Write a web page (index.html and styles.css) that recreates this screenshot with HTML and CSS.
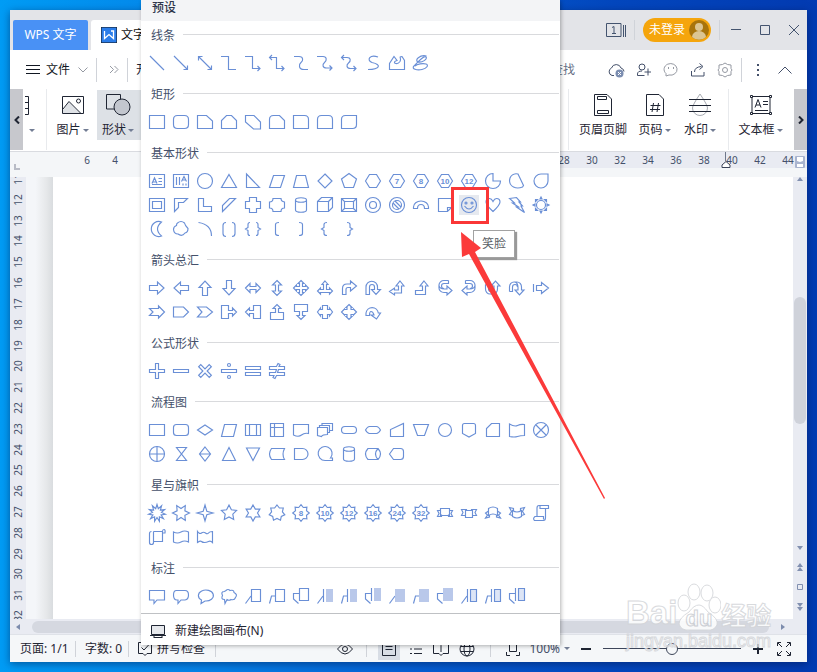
FILE: index.html
```html
<!DOCTYPE html>
<html lang="zh-CN">
<head>
<meta charset="utf-8">
<title>WPS 文字</title>
<link rel="stylesheet" href="styles.css">
</head>
<body>
<main class="window">
  <header class="titlebar">
    <button class="home-tab">WPS 文字</button>
    <button class="doc-tab"><svg width="16" height="16" viewBox="0 0 16 16"><rect width="16" height="16" rx="1" fill="#2b7de9"/><path d="M3.500 4v7.500l4.500-4 4.500 4V4h-2.500" fill="none" stroke="#fff" stroke-width="1.300"/></svg>文字</button>
    <span class="spacer"></span>
    <button class="icon-btn count" aria-label="窗口"><svg width="20" height="14" viewBox="0 0 20 14"><path d="M.5.500h14.500v13H.5zM17.500 2v12M19.500 2v12" /><path d="M6 4.500l2-1v7M6 10.500h4"/></svg></button>
    <span class="rule"></span>
    <button class="login">未登录<svg width="20" height="20" viewBox="0 0 20 20"><circle cx="10" cy="10" r="10" fill="#a8740c" stroke="none"/><circle cx="10" cy="7" r="4" fill="#dcc592" stroke="none"/><path d="M3 17a7 6 0 0 1 14 0 10 10 0 0 1-14 0z" fill="#dcc592" stroke="none"/></svg></button>
    <span class="rule"></span>
    <div class="win-controls">
      <button class="icon-btn" aria-label="最小化"><svg width="12" height="12" viewBox="0 0 12 12"><path d="M1 5.500h10"/></svg></button>
      <button class="icon-btn" aria-label="最大化"><svg width="12" height="12" viewBox="0 0 12 12"><path d="M1.500 1.500h9v9h-9z"/></svg></button>
      <button class="icon-btn" aria-label="关闭"><svg width="12" height="12" viewBox="0 0 12 12"><path d="M1 1l10 10M11 1L1 11"/></svg></button>
    </div>
  </header>

  <nav class="menubar">
    <button class="file"><svg width="14" height="12" viewBox="0 0 14 12"><path d="M0 1.500h14M0 5.500h14M0 9.500h14"/></svg>文件<svg class="faint" width="10" height="6" viewBox="0 0 10 6"><path d="M.5.500l4.500 4.500L9.500.500"/></svg></button>
    <span class="rule"></span>
    <button class="icon-btn faint more" aria-label="更多"><svg width="10" height="9" viewBox="0 0 10 9"><path d="M1 1l3.500 3.500L1 8M5.500 1L9 4.500 5.500 8"/></svg></button>
    <span class="rule"></span>
    <button class="start">开始</button>
    <span class="spacer"></span>
    <button class="find">查找</button>
    <div class="menu-icons">
      <button class="icon-btn" aria-label="云同步"><svg width="18" height="16" viewBox="0 0 18 16"><path d="M7 13.500H5a4 4 0 0 1-.5-7.500 5 5 0 0 1 9.500 0q3 1 3 3.500"/><circle cx="12.500" cy="11.500" r="4" fill="#7b8db0" stroke="none"/><path d="M11 10l3 3M14 10l-3 3" stroke="#fff"/></svg></button>
      <button class="icon-btn" aria-label="共享用户"><svg width="16" height="16" viewBox="0 0 16 16"><circle cx="6" cy="5" r="3"/><path d="M8.500 13.500H1.500V12q0-3 4.500-3M12 6.500v7M8.500 10h6.500"/></svg></button>
      <button class="icon-btn faint" aria-label="消息"><svg width="16" height="16" viewBox="0 0 16 16"><path d="M3 11.500A6.500 5.800 0 1 1 6 13l-3 1zM5.500 5v2M10.500 5v2"/></svg></button>
      <button class="icon-btn" aria-label="分享"><svg width="16" height="16" viewBox="0 0 16 16"><path d="M1.500 9v5h12.500v-4M4.500 10q0-5 7-5.500M9.500 1.500l3.500 3-3.500 3"/></svg></button>
      <button class="icon-btn faint" aria-label="设置"><svg width="16" height="16" viewBox="0 0 16 16"><path d="M5.500 2.500L8 1l2.500 1.500 3.500.5v3.500L15 8l-1 1.500V13l-3.500.5L8 15l-2.500-1.500L2 13V9.500L1 8l1-1.500V3z"/><circle cx="8" cy="8" r="2.500"/></svg></button>
    </div>
    <span class="rule"></span>
    <button class="icon-btn dots" aria-label="选项"><svg width="4" height="14" viewBox="0 0 4 14"><path d="M2 1v2M2 6v2M2 11v2" stroke-width="2"/></svg></button>
    <button class="icon-btn fold" aria-label="收起"><svg width="14" height="8" viewBox="0 0 14 8"><path d="M.5 7.500L7 1l6.500 6.500"/></svg></button>
  </nav>

  <section class="ribbon">
    <button class="scroll-btn" aria-label="向左"><svg width="6" height="8" viewBox="0 0 6 8"><path d="M5 .5L1.500 4 5 7.500"/></svg></button>
    <button class="tool cut" aria-label="表格"><svg width="5" height="22" viewBox="0 0 5 22"><path d="M0 2.500h3.500v18H0M0 8.500h3.500M0 14.500h3.500"/></svg><span class="caption"><i class="caret"></i></span></button>
    <span class="rule"></span>
    <button class="tool picture"><svg width="24" height="24" viewBox="0 0 24 24"><path d="M1.500 3.500h21v17h-21z" fill="#fff"/><path d="M2 17l6-8 11 11H2z" fill="#dfe2e6" stroke="none"/><path d="M2 16l6-7.500L19.500 20"/><circle cx="17.500" cy="8" r="2"/></svg><span class="caption">图片<i class="caret"></i></span></button>
    <button class="tool active"><svg width="26" height="24" viewBox="0 0 26 24"><path d="M1.500 1.500h14v14.500h-14z"/><circle cx="17" cy="14" r="8" fill="#c2c6ce"/></svg><span class="caption">形状<i class="caret"></i></span></button>
    <span class="spacer"></span>
    <span class="rule"></span>
    <button class="tool header-tool"><svg width="24" height="24" viewBox="0 0 24 24"><path d="M3.500 1.500H16l4.500 4.500v16.500h-17zM6.500 3.500h9v3h-9zM6.500 17.500h11v3h-11z"/></svg><span class="caption">页眉页脚</span></button>
    <button class="tool number-tool"><svg width="24" height="24" viewBox="0 0 24 24"><path d="M3.500 1.500H16l4.500 4.500v16.500h-17zM10.500 10l-1.500 9M15.500 10L14 19M7.500 12.500h10M7 16.500h10"/></svg><span class="caption">页码<i class="caret"></i></span></button>
    <button class="tool mark-tool"><svg width="24" height="24" viewBox="0 0 24 24"><path d="M12 1Q4.500 12 4.500 15a7.500 7.500 0 0 0 15 0Q19.500 12 12 1z" stroke="#a9acb3"/><path d="M1 6.500h22M1 12.500h22M1 18.500h22"/></svg><span class="caption">水印<i class="caret"></i></span></button>
    <span class="rule"></span>
    <button class="tool textbox"><svg width="24" height="24" viewBox="0 0 24 24"><path d="M3 3.500h18v17H3zM6 14.500L9 6.500l3 8M7 12h4M14 8.500h5M14 11.500h5M6 17.500h13"/><path d="M1.500 2.500h2v2h-2zM20.500 2.500h2v2h-2zM1.500 19.500h2v2h-2zM20.500 19.500h2v2h-2z" fill="#fff"/></svg><span class="caption">文本框<i class="caret"></i></span></button>
    <button class="scroll-btn right" aria-label="向右"><svg width="6" height="8" viewBox="0 0 6 8"><path d="M1 .5L4.500 4 1 7.500"/></svg></button>
  </section>

  <div class="ruler">
    <svg class="tabstop" width="6" height="6" viewBox="0 0 6 6"><path d="M1 0v5h5" fill="none" stroke="#b9bcc6" stroke-width="2"/></svg>
    <div class="ticks"><span>6</span><span>4</span></div>
    <span class="spacer"></span>
    <div class="ticks"><span>28</span><span>30</span><span>32</span><span>34</span><span>36</span><span>38</span><span>40</span><span>42</span><span>44</span></div>
    <svg class="indent" width="10" height="16" viewBox="0 0 10 16"><path d="M4.500 0v9" stroke="#70788a"/><path d="M5 9.500l4 3.500v2.500H1V13z" fill="#fff" stroke="#3a4358"/></svg>
    <svg class="save" width="10" height="12" viewBox="0 0 10 12"><rect width="10" height="12" rx="1" fill="#a9b4cf"/><path d="M2 1h6v4L5 6 2 5zM2 8h6v3H2z" fill="#fff"/></svg>
  </div>

  <section class="workspace">
    <div class="vruler"><div class="vticks" id="vticks"></div></div>
    <div class="gutter"></div>
    <div class="page"></div>
    <div class="vscroll">
      <svg class="up" width="6" height="4" viewBox="0 0 6 4"><path d="M0 4l3-4 3 4z"/></svg>
      <div class="vtrack"><div class="vthumb"></div></div>
      <svg width="6" height="4" viewBox="0 0 6 4"><path d="M0 0l3 4 3-4z"/></svg>
      <svg width="6" height="8" viewBox="0 0 6 8"><path d="M0 4l3-4 3 4zM0 8l3-4 3 4z"/></svg>
      <svg width="6" height="6" viewBox="0 0 6 6"><path d="M.5.500h5v5h-5z" fill="none" stroke="#8290b0"/></svg>
      <svg width="6" height="8" viewBox="0 0 6 8"><path d="M0 0l3 4 3-4zM0 4l3 4 3-4z"/></svg>
    </div>
  </section>

  <div class="hscroll">
    <svg width="4" height="6" viewBox="0 0 4 6"><path d="M4 0L0 3l4 3z"/></svg>
    <div class="hthumb"></div>
    <svg width="4" height="6" viewBox="0 0 4 6"><path d="M0 0l4 3-4 3z"/></svg>
  </div>

  <footer class="status">
    <span class="cell pages">页面: 1/1</span><span class="rule"></span>
    <span class="cell words">字数: 0</span><span class="rule"></span>
    <button class="spell"><svg width="16" height="16" viewBox="0 0 16 16"><path d="M13 1.500h1.500v11H10l-2 2-2-2H1.500v-11H10M4.500 6.500L7 9l5.500-6"/></svg>拼写检查</button><span class="rule"></span>
    <span class="spacer"></span>
    <button class="icon-btn eye" aria-label="护眼模式"><svg width="16" height="12" viewBox="0 0 16 12"><path d="M.5 6Q8-4 15.500 6 8 16 .5 6z"/><circle cx="8" cy="6" r="2.500"/></svg></button>
    <span class="rule"></span>
    <div class="views">
      <button class="icon-btn on" aria-label="页面视图"><svg width="14" height="14" viewBox="0 0 14 14"><path d="M.5.500h13v13H.5zM3.500 4.500h7M3.500 7.500h7"/></svg></button>
      <button class="icon-btn" aria-label="大纲"><svg width="14" height="12" viewBox="0 0 14 12"><path d="M0 1.500h2M4 1.500h10M2 6h2M6 6h8M2 10.500h2M6 10.500h8"/></svg></button>
      <button class="icon-btn" aria-label="阅读"><svg width="16" height="14" viewBox="0 0 16 14"><path d="M.5 1.500H6l2 2 2-2h5.500v10H10l-2 2-2-2H.5zM8 4v6"/></svg></button>
      <button class="icon-btn" aria-label="网页"><svg width="16" height="16" viewBox="0 0 16 16"><circle cx="8" cy="8" r="7"/><ellipse cx="8" cy="8" rx="3" ry="7"/><path d="M1.500 5.500h13M1.500 10.500h13"/></svg></button>
    </div>
    <span class="rule"></span>
    <button class="icon-btn fit" aria-label="适合页面"><svg width="14" height="14" viewBox="0 0 14 14"><path d="M3.500 1h7v8.500h-7zM.5 10v3.500H4M10 13.500h3.500V10"/></svg></button>
    <button class="zoom">100%<i class="caret"></i></button>
    <button class="icon-btn" aria-label="缩小"><svg width="10" height="10" viewBox="0 0 10 10"><path d="M0 5h10" stroke-width="2"/></svg></button>
    <input class="slider" type="range" aria-label="缩放" min="0" max="100" value="50">
    <button class="icon-btn" aria-label="放大"><svg width="10" height="10" viewBox="0 0 10 10"><path d="M0 5h10M5 0v10" stroke-width="2"/></svg></button>
    <button class="icon-btn full" aria-label="全屏"><svg width="14" height="14" viewBox="0 0 14 14"><path d="M.5 4V.5H4M10 .5h3.500V4M13.500 10v3.500H10M4 13.500H.5V10M1 1l4 4M13 1L9 5M13 13L9 9M1 13l4-4"/></svg></button>
  </footer>
</main>

<aside class="popup">
  <h2>预设</h2>
  <div id="gallery"></div>
  <button class="canvas"><svg width="16" height="14" viewBox="0 0 16 14"><path d="M1.500 1.500h13v9h-13z" fill="#e6e8ec"/><path d="M0 11.500h16M4 12v2M12 12v2M4 13.500h8"/></svg>新建绘图画布(N)</button>
</aside>

<div class="tooltip">笑脸</div>
<div class="marker"></div>
<svg class="pointer" width="146" height="268" viewBox="0 0 146 268"><path d="M0 0l20 16-6 4 130 246-1 1L8 22l-7 3z" fill="#fb3a3a"/></svg>

<div class="watermark">
  <div class="brand"><span>Bai</span><svg width="44" height="48" viewBox="2 3 44 48"><g fill="#fff" stroke="#d4d6da" stroke-width="1"><ellipse cx="9" cy="23" rx="6" ry="8"/><ellipse cx="19" cy="12" rx="6" ry="8"/><ellipse cx="32" cy="13" rx="6" ry="8"/><ellipse cx="40" cy="25" rx="6" ry="8"/><path d="M24 25q4 0 9 7 11 7 9 13-3 6-10 5H15q-9 1-11-6 0-6 10-12 5-7 10-7z"/></g><text x="24" y="46" text-anchor="middle">du</text></svg><span class="cn">经验</span></div>
  <div class="site">jingyan.baidu.com</div>
</div>
<script src="shapes.js"></script>
</body>
</html>
```
FILE: styles.css
```css
* { box-sizing: border-box; }
body {
  margin: 0;
  height: 100vh;
  padding: 10px;
  position: relative;
  overflow: hidden;
  display: flex;
  font: 12px/16px "Noto Sans", "Noto Sans CJK SC", sans-serif;
  color: #1f2533;
  background: linear-gradient(90deg, #009cf5 0%, #0583e8 25%, #0560d4 50%, #0347be 75%, #033bb2 100%);
}
button { font: inherit; color: inherit; background: none; border: 0; padding: 0; margin: 0; display: flex; align-items: center; white-space: nowrap; flex: none; }
button svg { fill: none; stroke: currentColor; }
svg { display: block; flex: none; }
h2, h3 { margin: 0; font-size: 12px; }
.icon-btn { justify-content: center; }
.spacer { flex: 1; }
.rule { flex: none; width: 1px; height: 20px; background: #d0d3d9; }
.caret { border: 3px solid transparent; border-top: 3px solid #727d94; border-bottom: 0; }
.faint { color: #9599a2; }

.window { flex: 1; min-width: 0; display: flex; flex-direction: column; background: #fff; box-shadow: 0 2px 8px rgba(0, 20, 70, .5); overflow: hidden; }

.titlebar { flex: none; height: 40px; padding: 0 7px 0 3px; display: flex; align-items: center; background: #e3e4e8; color: #44546f; }
.home-tab { align-self: flex-end; height: 30px; width: 75px; justify-content: center; background: #4991f5; color: #fff; border-radius: 2px 2px 0 0; }
.doc-tab { align-self: flex-end; height: 30px; width: 120px; margin-left: 3px; padding-left: 10px; gap: 4px; background: #fff; color: #111; border-radius: 3px 3px 0 0; }
.count { margin-right: 8px; }
.login { height: 24px; margin: 0 8px; padding: 0 2px 0 6px; gap: 4px; border-radius: 12px; background: #f5a50c; color: #fff; }
.win-controls { display: flex; gap: 17px; margin-left: 10px; }

.menubar { flex: none; height: 39px; padding: 0 15px 0 16px; display: flex; align-items: center; color: #44506a; }
.menubar .rule { height: 24px; }
.file { color: #111722; gap: 6px; margin-right: 8px; }
.file .faint { margin-left: 2px; }
.more { margin: 0 8px 0 12px; }
.start { margin-left: 8px; color: #1f2533; }
.find { margin-right: 32px; color: #667085; }
.menu-icons { display: flex; gap: 11px; margin-right: 8px; }
.dots { margin: 0 18px 0 14px; }

.ribbon { flex: none; height: 63px; display: flex; align-items: flex-start; border-bottom: 1px solid #d9dbe0; }
.ribbon > .rule { height: 61px; background: #e8eaed; }
.scroll-btn { width: 13px; height: 61px; justify-content: center; background: #c7c8cd; }
.scroll-btn svg { stroke-width: 2; }
.tool { flex-direction: column; height: 50px; width: 45px; margin-top: 1px; padding-top: 3px; gap: 5px; }
.caption { display: flex; align-items: center; gap: 2px; height: 16px; }
.tool svg { height: 24px; }
.cut { width: 23px; align-items: flex-start; padding-left: 2px; }
.cut .caption { padding-left: 4px; }
.picture { margin-left: 3px; }
.active { background: #dde1e6; width: 44px; margin-left: 2px; padding-right: 2px; }
.header-tool { width: 68px; }
.number-tool { width: 35px; }
.mark-tool { width: 56px; }
.textbox { width: 65px; padding-right: 2px; }

.ruler { flex: none; position: relative; height: 25px; display: flex; align-items: flex-start; padding-right: 5px; color: #44506a; font-size: 10px; background: linear-gradient(#e9ebf2, #e9ebf2) 100% 0 / 660px 16px no-repeat #f4f6f8; }
.tabstop { margin: 12px 0 0 4px; }
.ticks { display: flex; }
.ticks span { width: 28px; text-align: center; }
.tabstop + .ticks { margin-left: 53px; }
.indent { position: absolute; right: 76px; top: 0; }
.save { position: absolute; right: 2px; top: 4px; }

.workspace { flex: 1; min-height: 0; display: flex; }
.vruler { width: 16px; background: #e9ebf2; overflow: hidden; display: flex; }
.vticks { flex: 1; margin: -8px 0; display: flex; flex-direction: column; font-size: 10px; color: #44506a; }
.vticks span { flex: 1; min-height: 0; writing-mode: vertical-rl; transform: rotate(180deg); text-align: center; }
.gutter { width: 27px; background: linear-gradient(90deg, #f4f6f9 35%, #e6e8ea 75%, #d9dcdf); }
.page { flex: 1; background: #fff; }
.vscroll { width: 14px; background: #e9ebf2; display: flex; flex-direction: column; align-items: center; gap: 13px; padding-bottom: 8px; fill: #8290b0; }
.vtrack { flex: 1; align-self: stretch; padding: 0 1px; margin-top: -13px; }
.vthumb { height: 36%; margin-top: 116px; border-radius: 6px; background: #cfd2da; }

.hscroll { flex: none; height: 15px; display: flex; align-items: center; justify-content: space-between; gap: 12px; padding: 0 22px 0 6px; background: #e9ebf2; fill: #7d8cad; }
.hthumb { flex: 1; height: 12px; border-radius: 6px; background: #d5d8e0; }

.status { flex: none; height: 28px; display: flex; align-items: center; padding-right: 16px; background: #f5f7f9; border-top: 1px solid #dfe2e8; color: #1f2533; }
.status .rule { height: 16px; }
.cell { flex: none; }
.pages { width: 65px; padding-left: 10px; }
.words { width: 52px; padding-left: 9px; }
.spell { gap: 4px; margin: 0 10px 0 8px; }
.eye { margin-right: 13px; }
.views { display: flex; gap: 4px; margin: 0 12px 0 11px; }
.views button { width: 22px; height: 22px; }
.views .on { background: #d8dde5; }
.fit { margin: 0 9px 0 15px; }
.zoom { gap: 4px; margin-right: 11px; color: #44506a; }
.slider { appearance: none; width: 138px; height: 12px; margin: 0 12px; background: linear-gradient(#3d465a, #3d465a) 0 50% / 100% 1px no-repeat; }
.slider::-webkit-slider-thumb { appearance: none; width: 12px; height: 12px; border: 1px solid #3d465a; border-radius: 50%; background: #f5f7f9; }
.full { margin-left: 14px; }

.popup { position: absolute; left: 141px; top: 0; width: 419px; background: #fff; box-shadow: 1px 1px 4px rgba(0, 0, 0, .3); }
.popup h2 { height: 21px; padding-left: 11px; line-height: 15px; font-weight: 500; background: #f3f4f6; color: #2f374b; }
.group { padding-bottom: 5px; }
.group h3 { display: flex; align-items: center; gap: 8px; height: 27px; margin-bottom: 3px; padding: 0 1px 0 10px; line-height: 18px; font-weight: 400; color: #44506a; }
.group h3 span { padding-top: 2px; }
.group h3::after { content: ""; flex: 1; height: 1px; background: #d9dadd; }
.shapes { display: grid; grid-template-columns: repeat(17, 24px); grid-auto-rows: 24px; padding-left: 4px; color: #6a8fd6; }
.shapes svg { stroke-width: 1.15px; }
.shapes text { font: 700 8px/8px "Liberation Sans", sans-serif; fill: currentColor; stroke: none; text-anchor: middle; }
.shapes .solid { fill: #b9c8ea; stroke: none; }
.shapes .tint { fill: #dde5f6; }
.shapes .picked { background: linear-gradient(#e6e9ef, #e6e9ef) 50% / 20px 20px no-repeat; }
.canvas { width: 100%; height: 32px; padding: 2px 0 0 9px; gap: 9px; border-top: 1px solid #bfc1c4; }

.tooltip { position: absolute; left: 473px; top: 230px; padding: 5px 8px; color: #5b5f66; background: #fff; border: 1px solid #a2a2a2; box-shadow: 2px 2px 1px #999; }
.marker { position: absolute; left: 451px; top: 187px; width: 38px; height: 37px; border: 3px solid #fa3636; }
.pointer { position: absolute; left: 461px; top: 232px; }

.watermark { position: absolute; left: 626px; top: 583px; opacity: .85; color: #fff; -webkit-text-stroke: 1px #d2d4d8; }
.brand { display: flex; align-items: flex-end; font: 700 33px/36px "Liberation Sans", sans-serif; }
.brand text { font-size: 22px; fill: #fff; stroke: #c9ccd1; }
.brand .cn { font: 700 25px/34px "Noto Sans CJK SC", sans-serif; }
.site { font: 18px/20px "Liberation Sans", sans-serif; }
```
FILE: shapes.js
```js
// Each shape is drawn in a 24 x 24 cell centred on (12, 12).
const p = (d, cls) => `<path d="${d}"${cls ? ` class="${cls}"` : ''}/>`;
const turn = (a, s) => `<g transform="rotate(${a} 12 12)">${s}</g>`;
const flip = s => `<g transform="matrix(-1 0 0 1 24 0)">${s}</g>`;
const circle = (r, x = 12, y = 12) => `<circle cx="${x}" cy="${y}" r="${r}"/>`;
const num = t => `<text x="12" y="15">${t}</text>`;
function star(n, outer, inner, start = -90) {
  let d = '';
  for (let i = 0; i < n * 2; i++) {
    const r = i % 2 ? inner : outer;
    const a = (start + i * 180 / n) * Math.PI / 180;
    d += (i ? 'L' : 'M') + (12 + r * Math.cos(a)).toFixed(1) + ' ' + (12 + r * Math.sin(a)).toFixed(1);
  }
  return p(d + 'z');
}
const hex = 'M4.500 12l4-6.500h7l4 6.500-4 6.500h-7z';
const right = p('M4.500 9.500h8v-3.500l6.500 6-6.500 6v-3.500h-8z');
const curved = p('M15.500 4.500h-4.500a5 4.500 0 0 0-5 4.500v3a5 4.500 0 0 0 5 4.500h3V19l5-4.500-5-4.500v3h-2.500q-5 0-5.500-3.500M15.500 4.500v3H11q-2.500 0-2.500 2.500t2.500 2.500');
const boxArrow = p('M4.500 5.500h7v5h4V8l4 4-4 4v-2.500h-4v5h-7z');
const lead = ['M4.500 19.500L10 12', 'M4.500 19.500l2-7.500H10', 'M9.500 19.500L4.500 15V9.500H10'];

const groups = [
  ['线条', [
    p('M5 5l14 14'), p('M5 5l13.500 13.500M18.500 14.500v4h-4'), p('M5.500 5.500l13 13M18.500 14.500v4h-4M5.500 9.500v-4h4'),
    p('M4 5.500h7.500v13H19'), p('M4 5.500h7.500v12H19M16.500 15l2.500 2.500-2.500 2.500'), p('M4.500 6.500h7v11H19M16.500 15l2.500 2.500-2.500 2.500M7 4L4.500 6.500 7 9'),
    p('M5 5.500h5c5 0 4 4.500 2 6s-3 7 3 7h4'), p('M4 5.500h6c4 0 4 4 1.500 6s-2 5.500 2 5.500H19M16.500 14.500L19 17l-2.500 2.500'), p('M5 6.500h5c4 0 4 3.500 1.500 5.500s-2 5.500 2 5.500H19M16.500 15l2.500 2.500-2.500 2.500M7 4L4.500 6.500 7 9'),
    p('M17 6C9 3 5 9 11 11.500c10 2 8 7-4 7'), p('M4.500 18.500v-6L9 5.500l3 4c-6 2 0 5 3 1 2-3-2-5 2-5l2.500 4v9z'), p('M17.500 5C11 3.500 5 9 9 11c4 1 10-3 8-5S8 12 5 15s3 4.500 8 3.500 7-4.500 4-5.500-9 0-11 2')
  ]],
  ['矩形', [
    p('M4.500 5.500h15v13h-15z'), p('M8.500 5.500h7q4 0 4 4v5q0 4-4 4h-7q-4 0-4-4v-5q0-4 4-4z'),
    p('M4.500 5.500h9l6 5.500v7.500h-15z'), p('M9.500 5.500h5l5 5v8h-15v-8z'), p('M4.500 5.500h8.500l6.500 6.500v7h-7L4.500 12z'),
    p('M4.500 18.500v-9q0-4 4-4h6l5 5v8z'), p('M4.500 5.500h11q4 0 4 4v9h-15z'), p('M4.500 18.500v-9q0-4 4-4h7q4 0 4 4v9z'), p('M8.500 5.500h11v9q0 4-4 4h-11v-9q0-4 4-4z')
  ]],
  ['基本形状', [
    p('M4.500 5.500h15v13h-15zM7 14.500L9.500 9l2.500 5.500M8 13h3M13.500 9.500H17M13.500 12.500H17M7 15.500h10'), p('M4.500 5.500h15v13h-15zM7.500 8v8M10.500 8v8M12.500 12.500L15 7.500l2.500 5M13.500 11h3M14 14.500v2M17 14.500v2'), circle(7.5),
    p('M12 5.500l7.500 13h-15z'), p('M5.500 5l13 13.500h-13z'), p('M8.500 6.500h11l-4 12h-11z'), p('M7.500 6.500h9l3 12h-15z'), p('M12 5l7 7-7 7-7-7z'), p('M12 4.500l7.500 5.500-3 8.500h-9L4.500 10z'), p(hex),
    p(hex) + num(7), p(hex) + num(8), p(hex) + num(10), p(hex) + num(12), p('M12 4.500a7.500 7.500 0 1 0 7.500 7.500H12z'), p('M9.500 5a7 7 0 0 0-1 13q4 2 9 0l1-1.500L13 5q-2-.5-3.500 0z'), p('M19 5v7a7 7 0 1 1-7-7z'),
    p('M4.500 5.500h15v13h-15zM7.500 8.500h9v7h-9z'), p('M5.500 5.500h13l-4 4h-5v5l-4 4z'), p('M5.500 5.500h5v8h8v5h-13z'), p('M5.500 18.500v-6l7-7h6z'), p('M8.500 4.500h7v4h4v7h-4v4h-7v-4h-4v-7h4z'), p('M8 5.500h8q0 3 3.500 3.500v6q-3.500 0-3.500 3.500H8q0-3.500-3.500-3.500V9Q8 9 8 5.500z'), p('M6.500 7v10c0 3 11 3 11 0V7c0-3-11-3-11 0s11 3 11 0'), p('M4.500 8.500l4-4h11v10l-4 4h-11zM4.500 8.500h11v10M15.500 8.500l4-4'), p('M4.500 5.500h15v13h-15zM7.500 8.500h9v7h-9zM4.500 5.500l3 3M19.500 5.500l-3 3M4.500 18.500l3-3M19.500 18.500l-3-3'), circle(7.5) + circle(3.5), circle(7.5) + circle(4.5) + p('M8 10l6 6M10 8l6 6'), p('M4.500 15.500V14a7.500 6 0 0 1 15 0v1.500h-4q0-4-3.500-4t-3.500 4z'), p('M5.500 5.500h13v9l-4 4h-9zM14.500 18.500v-4h4'),
    circle(7.5) + circle(1, 9, 10) + circle(1, 15, 10) + p('M7.500 13q4.500 6 9 0'), p('M12 18.500Q5 12 5 9q0-3.500 3.500-3.500 2 0 3.500 3 1.500-3 3.500-3Q19 5.500 19 9q0 3-7 9.500z'), p('M4.500 5.500l7-1 4 4.500h-1.500l3.500 4h-1.500l3.500 6.500-8-5.500h2l-6-4h2z'), circle(4.5) + p('M11 6l1-2 1 2zM11 18l1 2 1-2zM6 11l-2 1 2 1zM18 11l2 1-2 1zM6.500 8.500l0-2 2 0zM17.500 8.500l0-2-2 0zM6.500 15.500l0 2 2 0zM17.500 15.500l0 2-2 0z'),
    p('M16.500 5a7.500 7.500 0 1 0 0 14q-8-7 0-14z'), p('M8.500 6q3.500-3 7 0 .5 2.500 3.500 5.500 0 4-3 4.500-3 4-7 1-4 0-4.500-4.500 0-3 3-4 0-2 1-2.500z'), p('M5.500 5.500q13 2 13 13.500'), p('M9 5.500q-3 0-3 3v8q0 3 3 3M15 5.500q3 0 3 3v8q0 3-3 3'), p('M9 5.500q-2 0-2 2v3L4.500 12 7 13.500v3q0 2 2 2M15 5.500q2 0 2 2v3l2.500 1.500-2.500 1.500v3q0 2-2 2'), p('M14 5.500q-3.500 0-3.500 2v9q0 2 3.500 2'), p('M10 5.500q3.500 0 3.500 2v9q0 2-3.500 2'), p('M14 5.500q-3 0-3 2v3L8.500 12l2.500 1.500v3q0 2 3 2'), p('M10 5.500q3 0 3 2v3l2.500 1.500-2.500 1.500v3q0 2-3 2')
  ]],
  ['箭头总汇', [
    right, turn(180, right), turn(-90, right), turn(90, right),
    p('M4.500 12l4.500-4.500v3h6v-3l4.500 4.500-4.500 4.500v-3H9v3z'), turn(90, p('M4.500 12l4.500-4.500v3h6v-3l4.500 4.500-4.500 4.500v-3H9v3z')),
    p('M12 4.500l3 3h-1.500v3h3V9l3 3-3 3v-1.500h-3v3H15l-3 3-3-3h1.500v-3h-3V15l-3-3 3-3v1.500h3v-3H9z'), p('M12 5l3 3.500h-1.500v5h3V12l3 3-3 3v-1.500h-9V18l-3-3 3-3v1.500h3v-5H9z'),
    p('M5.500 18.500v-6q0-4.500 4.500-4.500h3.500V5l6 5-6 5v-3.500H11q-2 0-2 2v5z'), p('M5 18.500V11a5.500 5.500 0 0 1 11.500 0v2.500h3l-4.500 5-4.500-5h3V11a2.500 2.500 0 0 0-5 0v7.500z'),
    p('M15 5l4 5h-2.500v7h-7v2l-5-3.500 5-3.500v2h4V10H11z'), p('M15 5l4 5h-2.500v8.500h-10v-4h7V10H11z'), curved, flip(curved), turn(-90, curved), flip(turn(90, curved)), p('M4.500 8v8M7.500 9.500h5v-3l7 5.500-7 5.500v-3h-5z'),
    p('M4.500 8.500h9V6l6 6-6 6v-2.500h-9L8 12z'), p('M4.500 7h10l5 5-5 5h-10z'), p('M4.500 7h9l6 5-6 5h-9L9 12z'), boxArrow, turn(180, boxArrow), turn(-90, boxArrow), turn(90, boxArrow),
    p('M9.500 5.500h5v4h2V8l3 4-3 4v-1.500h-2v4h-5v-4h-2V16l-3-4 3-4v1.500h2z'), p('M12 4.500l3 3h-1v2h2.500V9l3 3-3 3v-.500H14v2h1l-3 3-3-3h1v-2H7.500v.500l-3-3 3-3v.500H10v-2H9z'), p('M5 15.500V13a6.200 6.200 0 0 1 12.300 0h2.200L15.500 19 10 15h3q-1-3.500-3-3.500-1.500 0-1.500 4z')
  ]],
  ['公式形状', [
    p('M10.500 4.500h3v6h6v3h-6v6h-3v-6h-6v-3h6z'), p('M4.500 10.500h15v3h-15z'), turn(45, p('M10.500 4.500h3v6h6v3h-6v6h-3v-6h-6v-3h6z')), p('M4.500 10.500h15v3h-15z') + circle(1.5, 12, 6) + circle(1.5, 12, 18), p('M4.500 7.500h15v3h-15zM4.500 13.500h15v3h-15z'), p('M4.500 7.500h7l1.500-3 2 1-1 2h5.500v3h-6l-1 3h7v3h-8l-1.500 3-2-1 1-2h-4.500v-3h6l1-3h-7z')
  ]],
  ['流程图', [
    p('M4.500 6.500h15v11h-15z'), '<rect x="4.500" y="6.500" width="15" height="11" rx="3"/>', p('M12 7l7.500 5-7.500 5-7.500-5z'), p('M7.500 6.500h12l-3 12h-12z'), p('M4.500 6.500h15v11h-15zM8.500 6.500v11M15.500 6.500v11'), p('M5.500 5.500h13v13h-13zM9.500 5.500v13M5.500 9.500h13'), p('M4.500 6.500h15v9q-4-1-7 1.500t-8 0z'), p('M4.500 9.500h10v7q-5 0-6 2l-4-1zM6.500 9.500v-2h10v7h-2M9 7.500v-2h10.500v7h-3'), '<rect x="4.500" y="8.500" width="15" height="7" rx="3.500"/>', p('M4.500 12q2-3.500 4-3.500h7q2 0 4 3.500-2 3.500-4 3.500h-7q-2 0-4-3.500z'), p('M5.500 18.500v-7l13-6v13z'), p('M4.500 6.500h15l-4 11h-7z'), circle(6.5), p('M7.500 5.500h9q2 0 2 2v8L12 19l-6.500-3.500v-8q0-2 2-2z'), p('M10.500 5.500h8v13h-13v-8z'), p('M4.500 6q5 3 8 1.500t7-1v11q-4 0-7 1t-8 0z'), circle(7.5) + p('M7 7l10 10M17 7L7 17'),
    circle(7.5) + p('M12 4.500v15M4.500 12h15'), p('M7.500 5.500h10l-10 13h10z'), p('M12 5l5.500 7-5.500 7-5.500-7zM6.500 12h11'), p('M12 5.500l6.500 13h-13z'), p('M5.500 6h13L12 18.500z'), p('M6.500 6.500h13q-3 6 0 11h-13q-4-5.500 0-11z'), p('M5.500 6.500h8a5.500 5.500 0 0 1 0 11h-8z'), p('M17.500 16a7 7 0 1 0-5 2.500h7V16z'), p('M6.500 7v10c0 3 11 3 11 0V7c0-3-11-3-11 0s11 3 11 0'), p('M7 6.500h10q5 5.500 0 11H7q-5-5.500 0-11zM17 6.500q-5 5.500 0 11'), p('M4.500 12l4-5.500h7q3 0 3 3v5q0 3-3 3h-7z')
  ]],
  ['星与旗帜', [
    star(11, 8.5, 4.5), star(6, 8.5, 4.5, -60), star(4, 8, 2.5), star(5, 8, 4), star(6, 8, 4.5), star(7, 8, 5.5),
    ...[8, 10, 12, 16, 24, 32].map(n => star(8, 8.3, 6) + num(n)),
    p('M7.500 7.500h9v7h-9zM7.500 9.500h-3l1.500 3-1.500 3h4v-2M16.500 9.500h3l-1.500 3 1.500 3h-4v-2'), p('M8.500 9.500h7v7h-7zM8.500 14.500h-4l1.500-3-1.500-3h5v1M15.500 14.500h4l-1.500-3 1.500-3h-5v1'), p('M7.500 7.500q4.500-3 9 0v7q-4.500-3-9 0zM7.500 10l-3 2 2 2-2 3 4-1v-2M16.500 10l3 2-2 2 2 3-4-1v-2'), p('M7.500 9.500q4.500 3 9 0v6q-4.500 3-9 0zM7.500 14.500l-3-1 2-3-2-4 4 1v2M16.500 14.500l3-1-2-3 2-4-4 1v2'), p('M8 15.500V7q0-2.500 2-2.500h9.500v3h-3v9q0 3-2 3H5.500q-2-2 .5-4h8.500v3M11 4.500v3h5'),
    p('M8.500 6.500h9v10h-9M6.500 6.500q-2 0-2 2v9q0 2 2 2t2-2v-11M17.500 6.500q0-2 1.500-2t1 3.500h-3'), p('M4.500 7q4 2 7.500 0t7.500 0v10q-4-2-7.500 0t-7.500 0z'), p('M4.500 6.500q2 3 4 1.500t4 0 3 0 4-1.500v11q-2-2-4-1t-4 1-3-1-4 1z')
  ]],
  ['标注', [
    p('M4.500 6.500h15V16H12l-3 3.500V16H4.500z'), p('M8 6.500h8q3.500 0 3.500 4.500T16 16h-4l-3 3.500V16H8q-3.500 0-3.500-5T8 6.500z'), p('M8 19.500l.5-3.500A7.500 5.500 0 1 1 12 17z'), p('M9 6.500q2-2 4 0 4-1 4 2 4 2 1.500 5-1 3-4.500 2-2 1.500-4 0L8 19.500l-.5-4q-4 0-2-4-2-4 2-4z'),
    p('M10.500 5.500h9v12h-9z' + lead[0]), p('M10.500 5.500h9v12h-9z' + lead[1]), p('M10.500 4.500h9v12h-9z' + lead[2]),
    ...lead.map((l, i) => p(`M10.500 ${i === 2 ? 4 : 5}v13${l}`) + p(`M13 ${i === 2 ? 4 : 5}h7v13h-7z`, 'solid')),
    ...lead.map((l, i) => p(l) + p(`M10 ${i === 2 ? 4 : 5}h10v13H10z`, 'solid')),
    ...lead.map((l, i) => p(`M10.500 ${i === 2 ? 4 : 5}v13${l}`) + p(`M13.500 ${i === 2 ? 4.5 : 5.5}h6v12h-6z`, 'tint'))
  ]]
];

document.getElementById('gallery').innerHTML = groups.map(([title, items]) =>
  `<section class="group"><h3><span>${title}</span></h3><div class="shapes">` +
  items.map((s, i) => `<button${title === '基本形状' && i === 30 ? ' class="picked"' : ''} aria-label="${title} ${i + 1}"><svg width="24" height="24" viewBox="0 0 24 24">${s}</svg></button>`).join('') +
  '</div></section>').join('');

document.getElementById('vticks').innerHTML =
  Array.from({ length: 22 }, (_, i) => `<span>${i + 11}</span>`).join('');
```
